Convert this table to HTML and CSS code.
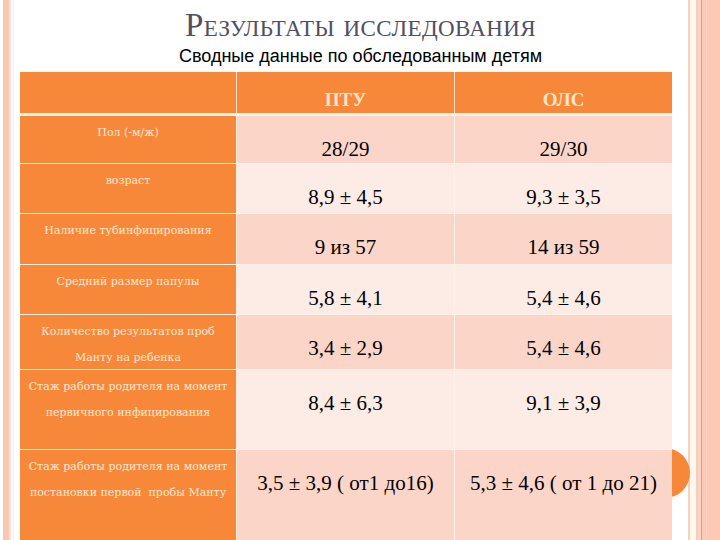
FILE: index.html
```html
<!DOCTYPE html>
<html lang="ru">
<head>
<meta charset="utf-8">
<title>Результаты исследования</title>
<link rel="stylesheet" href="styles.css">
</head>
<body>
<div class="left-edge"></div>
<main class="main">
  <header class="heading">
    <h1 class="title">Результаты исследования</h1>
    <p class="subtitle">Сводные данные по обследованным детям</p>
  </header>
  <section class="table-wrap">
    <div class="badge"></div>
    <div class="table">
      <div class="head-row">
        <div class="hcell hcell-empty"></div>
        <div class="hcell">ПТУ</div>
        <div class="hcell">ОЛС</div>
      </div>
      <div class="body-grid">
        <div class="label">Пол (-м/ж)</div>
        <div class="cell odd">28/29</div>
        <div class="cell odd">29/30</div>

        <div class="label">возраст</div>
        <div class="cell even">8,9 ± 4,5</div>
        <div class="cell even">9,3 ± 3,5</div>

        <div class="label">Наличие тубинфицирования</div>
        <div class="cell odd">9 из 57</div>
        <div class="cell odd">14 из 59</div>

        <div class="label">Средний размер папулы</div>
        <div class="cell even">5,8 ± 4,1</div>
        <div class="cell even">5,4 ± 4,6</div>

        <div class="label">Количество результатов проб<br>Манту на ребенка</div>
        <div class="cell odd">3,4 ± 2,9</div>
        <div class="cell odd">5,4 ± 4,6</div>

        <div class="label">Стаж работы родителя на момент<br>первичного инфицирования</div>
        <div class="cell even">8,4 ± 6,3</div>
        <div class="cell even">9,1 ± 3,9</div>

        <div class="label">Стаж работы родителя на момент<br>постановки первой &nbsp;пробы Манту</div>
        <div class="cell odd">3,5 ± 3,9 ( от1 до16)</div>
        <div class="cell odd">5,3 ± 4,6 ( от 1 до 21)</div>
      </div>
    </div>
  </section>
</main>
<div class="right-edge"></div>
</body>
</html>
```

FILE: styles.css
```css
html, body {
  margin: 0;
  padding: 0;
}
body {
  width: 720px;
  height: 540px;
  overflow: hidden;
  display: flex;
  background: #ffffff;
}
.left-edge {
  width: 15px;
  flex: none;
  background: linear-gradient(to right,
    #ffffff 0, #ffffff 3px,
    #fcc5af 3px, #fcc5af 9px,
    #fde2d6 9px, #fde2d6 11px,
    #ffffff 11px, #ffffff 13px,
    #fbece4 13px, #fbece4 14px,
    #ffffff 14px);
}
.right-edge {
  width: 32px;
  flex: none;
  background: linear-gradient(to right,
    #f1d3c4 0, #f1d3c4 2px,
    #fff6ec 2px, #fff6ec 8px,
    #efcfbf 8px, #efcfbf 10px,
    #fcd3c3 10px, #fcd3c3 13px,
    #f2987e 13px, #f2987e 14px,
    #fdc8b4 14px, #fdc8b4 18px,
    #fdd5c6 18px, #fdd5c6 19px,
    #fdc8b4 19px);
}
.main {
  flex: 1;
  display: flex;
  flex-direction: column;
  min-width: 0;
}
.heading {
  padding-left: 18px;
  text-align: center;
}
.title {
  margin: 6px 0 0;
  font-family: "Liberation Serif", serif;
  font-weight: normal;
  font-size: 33px;
  line-height: 38px;
  letter-spacing: 0.4px;
  font-variant: small-caps;
  color: #505062;
}
.subtitle {
  margin: 2px 0 0;
  font-family: "Liberation Sans", sans-serif;
  font-size: 18px;
  line-height: 21px;
  color: #000000;
}
.table-wrap {
  position: relative;
  margin: 5px 0 0 5px;
  width: 652px;
}
.badge {
  position: absolute;
  left: 620px;
  top: 376px;
  width: 50px;
  height: 50px;
  border-radius: 50%;
  background: #f7883a;
}
.table {
  position: relative;
  display: flex;
  flex-direction: column;
  gap: 3px;
  background: #fdf1e8;
}
.head-row {
  display: grid;
  grid-template-columns: 216px 217px 217px;
  column-gap: 1px;
  height: 41px;
  background: #f7883a;
}
.hcell {
  background: #f7883a;
  padding-top: 16px;
  line-height: 24px;
  text-align: center;
  font-family: "Liberation Serif", serif;
  font-weight: bold;
  font-size: 19px;
  color: #fde5cc;
}
.head-row .hcell + .hcell {
  box-shadow: -1px 0 0 #fde3cc;
}
.body-grid {
  display: grid;
  grid-template-columns: 216px 217px 217px;
  grid-template-rows: 47px 49px 50px 49px 54px 79px 90px;
  column-gap: 1px;
  row-gap: 1px;
}
.label {
  background: #f7883a;
  padding-top: 4px;
  line-height: 26px;
  text-align: center;
  font-family: "DejaVu Serif", serif;
  font-size: 11px;
  color: #fde8d4;
  white-space: nowrap;
}
.cell {
  padding-top: 21px;
  line-height: 24px;
  text-align: center;
  font-family: "Liberation Serif", serif;
  font-size: 21px;
  color: #000000;
  white-space: nowrap;
}
.odd {
  background: #fbd6c8;
}
.even {
  background: #fdece5;
}
```
